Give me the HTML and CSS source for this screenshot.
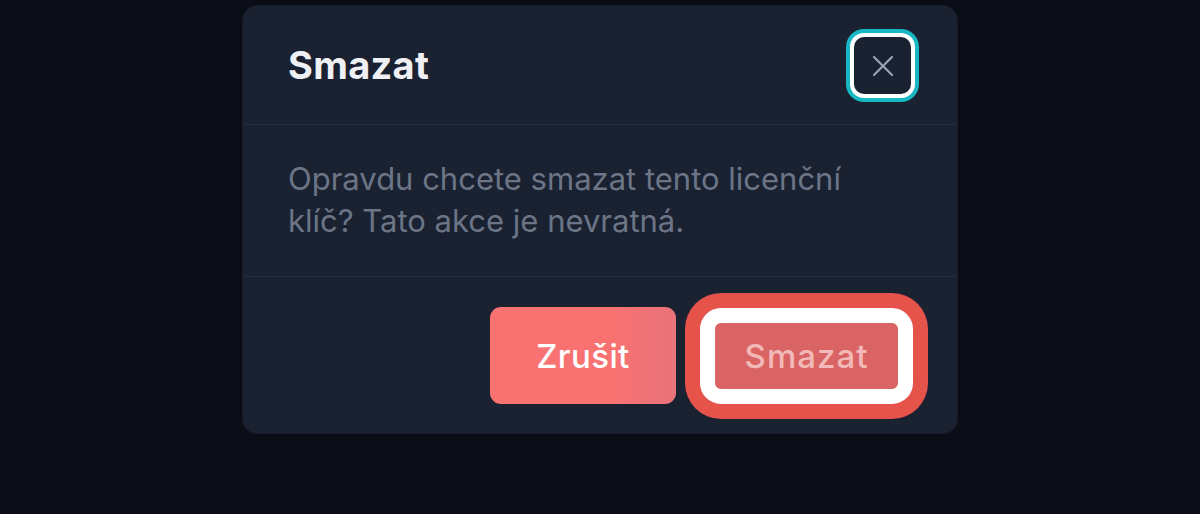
FILE: index.html
```html
<!DOCTYPE html>
<html lang="cs">
<head>
<meta charset="utf-8">
<title>Smazat</title>
<link rel="stylesheet" href="styles.css">
</head>
<body>
<div class="stage">
  <div class="modal" role="dialog" aria-labelledby="modal-title">
    <header class="modal-header">
      <h2 class="modal-title" id="modal-title">Smazat</h2>
      <button class="close-btn" aria-label="Zavřít">
        <svg class="close-icon" viewBox="0 0 24 24" width="24" height="24" fill="none" stroke="currentColor" stroke-width="2.2" stroke-linecap="round">
          <path d="M3 3L21 21M21 3L3 21"/>
        </svg>
      </button>
    </header>
    <div class="modal-body">
      <p class="modal-text">Opravdu chcete smazat tento licenční klíč? Tato akce je nevratná.</p>
    </div>
    <footer class="modal-footer">
      <button class="btn btn-cancel">Zrušit</button>
      <button class="btn btn-delete">Smazat</button>
    </footer>
  </div>
</div>
</body>
</html>
```
FILE: styles.css
```css
* { box-sizing: border-box; }
html, body {
  margin: 0;
  height: 100%;
}
body {
  background: #0a0d16;
  font-family: Inter, "Noto Sans", "Liberation Sans", sans-serif;
  overflow: hidden;
}
.stage {
  display: flex;
  justify-content: center;
  padding-top: 6px;
}
.modal {
  width: 714px;
  background: #1a2131;
  border-radius: 14px;
  box-shadow: 0 0 0 1px #141a27;
  display: flex;
  flex-direction: column;
}
.modal-header {
  height: 119px;
  padding: 0 46px 0 45px;
  display: flex;
  align-items: center;
  justify-content: space-between;
  border-bottom: 1px solid #272f3e;
}
.modal-title {
  margin: 0;
  color: #eef0f4;
  font-size: 38px;
  font-weight: 700;
  letter-spacing: 0.3px;
  line-height: 1;
}
.close-btn {
  width: 57px;
  height: 57px;
  padding: 0;
  border: none;
  border-radius: 10px;
  background: #1a2131;
  color: #9aa3b2;
  display: flex;
  align-items: center;
  justify-content: center;
  box-shadow: 0 0 0 4px #ffffff, 0 0 0 8px #19b6c4;
  margin-top: 1px;
}
.close-icon {
  width: 24px;
  height: 24px;
  display: block;
}
.modal-body {
  padding: 33px 45px 34px;
  border-bottom: 1px solid #252d3c;
}
.modal-text {
  margin: 0;
  color: #6c7586;
  font-size: 31px;
  letter-spacing: 0;
  line-height: 42px;
  max-width: 600px;
}
.modal-footer {
  padding: 30px 44px 29px;
  display: flex;
  justify-content: flex-end;
  gap: 24px;
}
.btn {
  height: 97px;
  border: none;
  border-radius: 11px;
  font-family: inherit;
  font-size: 33px;
  font-weight: 500;
  cursor: pointer;
}
.btn-cancel {
  width: 186px;
  color: #ffffff;
  letter-spacing: 0.4px;
  background: linear-gradient(90deg, #f87272 0%, #f87272 68%, #e8737a 100%);
}
.btn-delete {
  width: 213px;
  height: 96px;
  color: #f2b9b8;
  letter-spacing: 1px;
  background: #da6464;
  border: 15px solid #ffffff;
  border-radius: 21px;
  box-shadow: 0 0 0 15px #e5534b;
  margin-top: 1px;
}
```
